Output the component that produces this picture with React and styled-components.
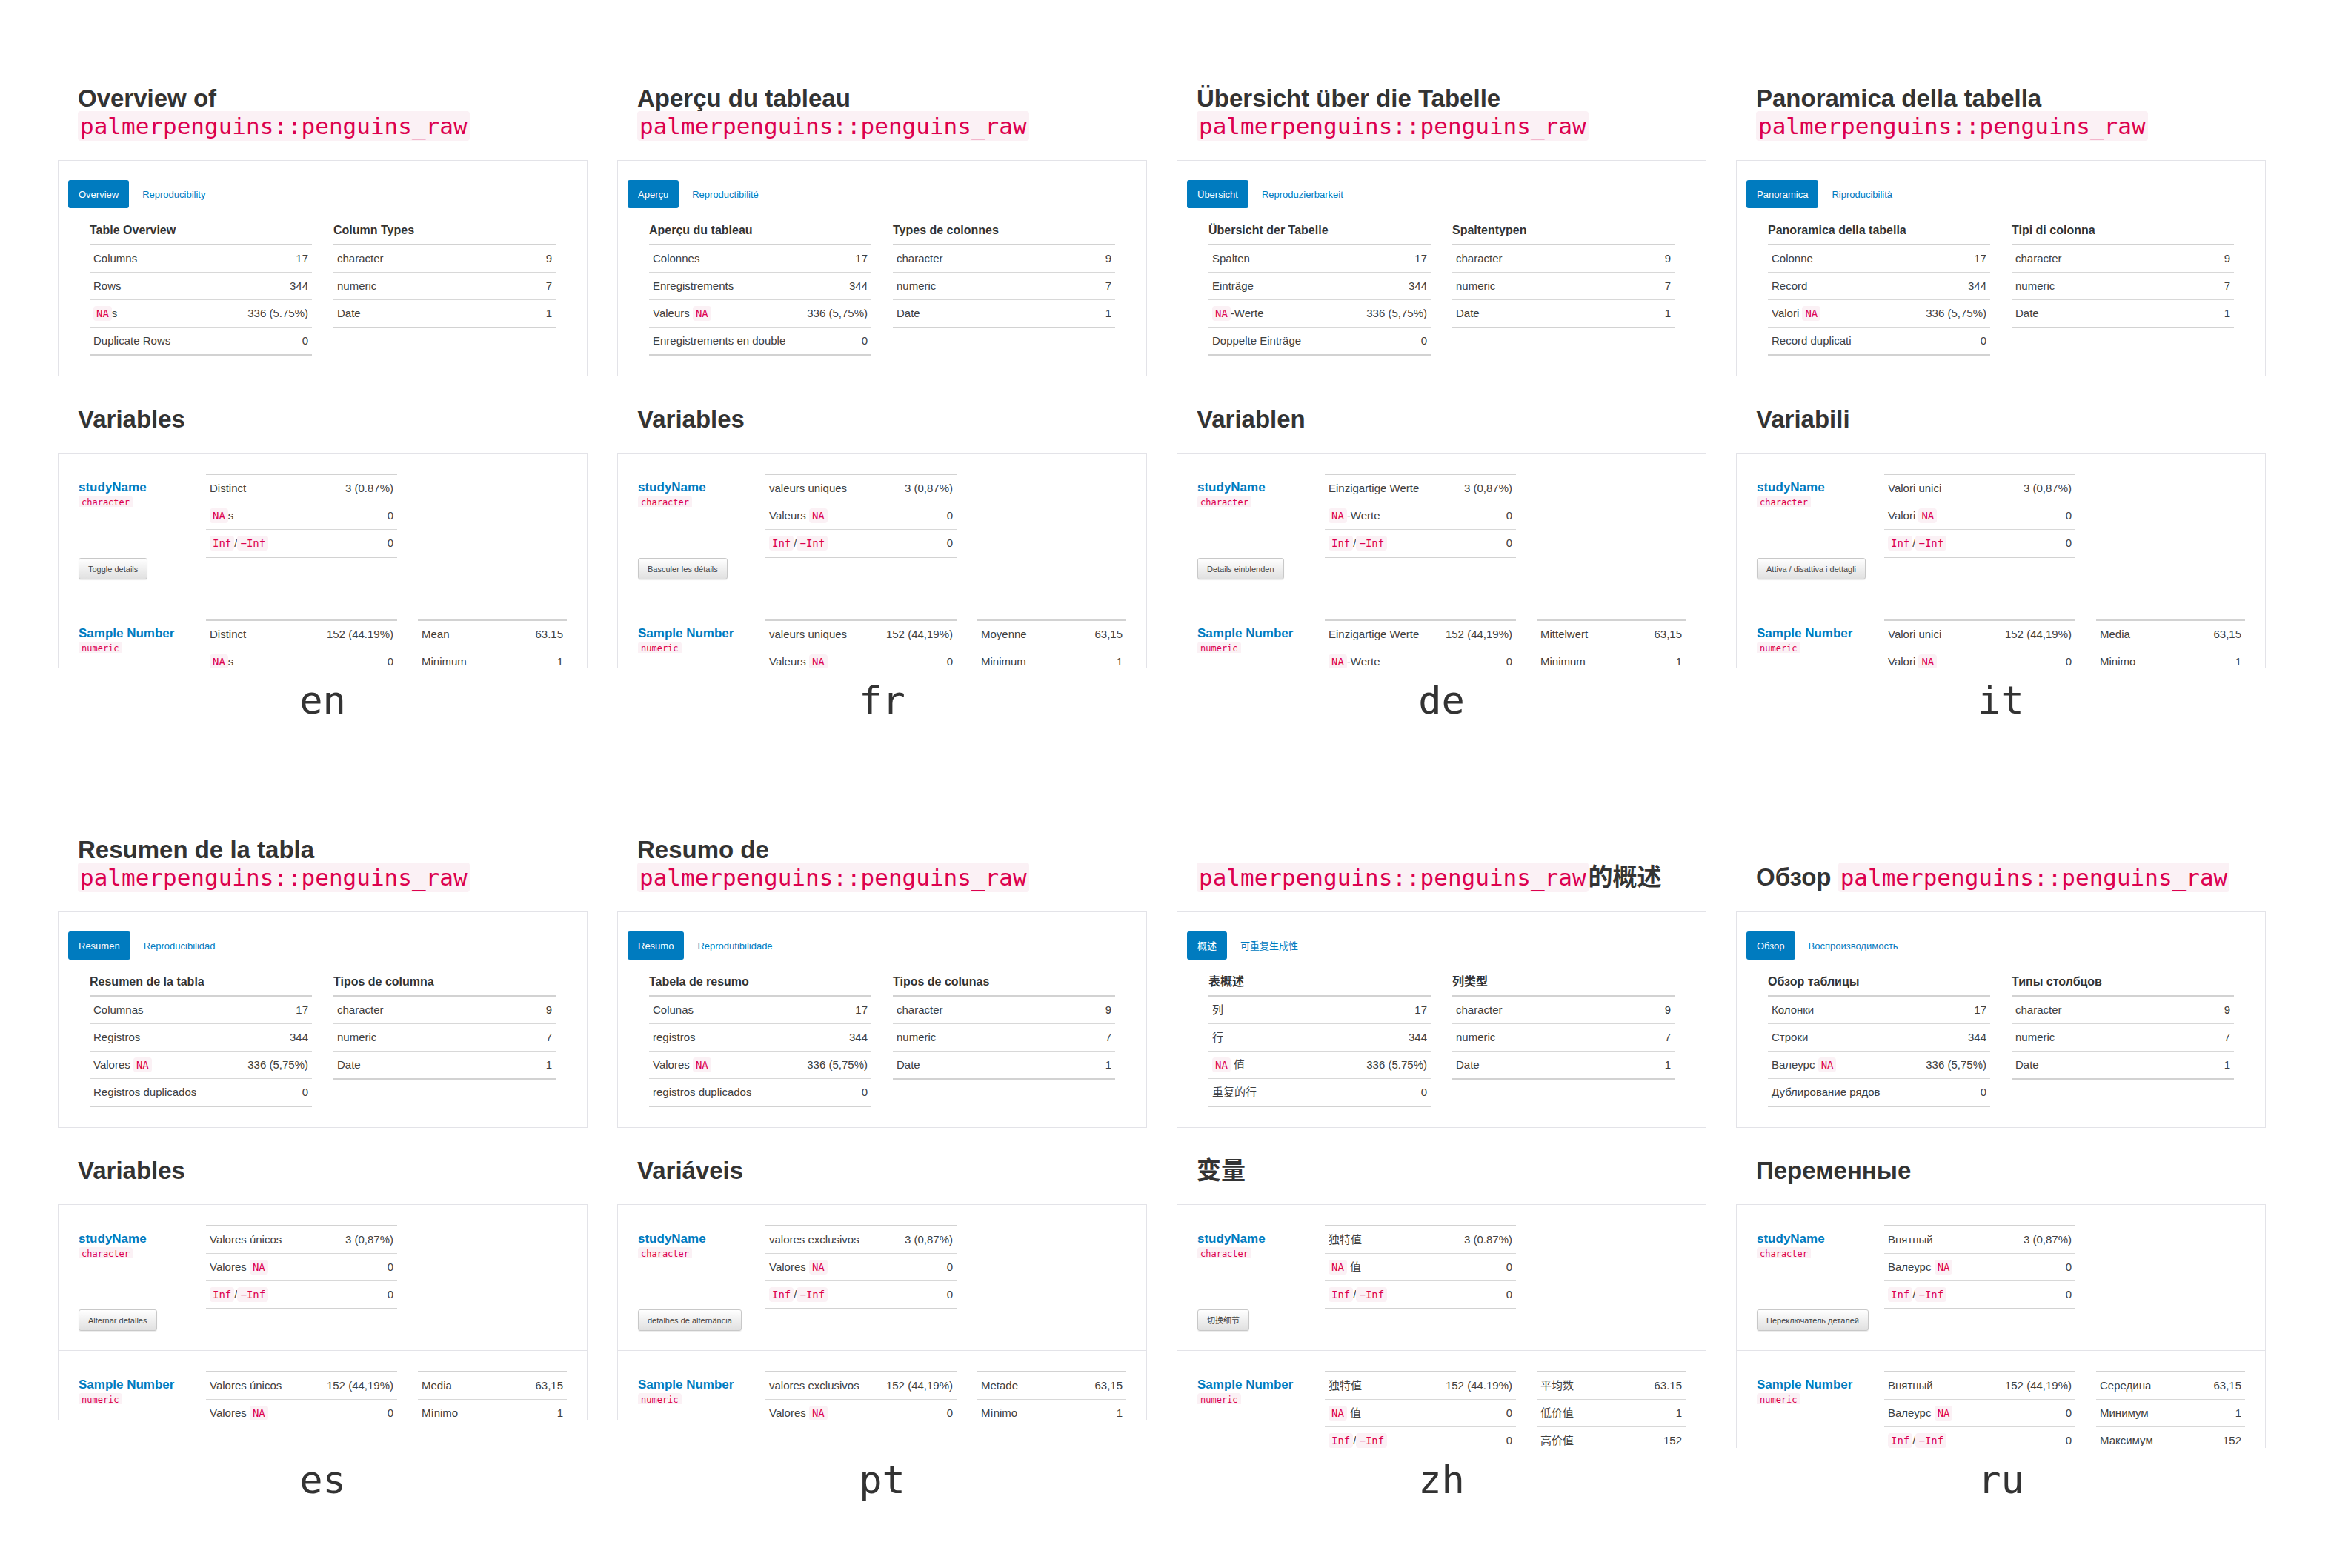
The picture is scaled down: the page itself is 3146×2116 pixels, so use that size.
import React from "react";
import styled, { createGlobalStyle } from "styled-components";

const sans = `"Liberation Sans", "Noto Sans CJK SC", Arial, sans-serif`;
const mono = `"DejaVu Sans Mono", "Liberation Mono", monospace`;

const color = {
  heading: "#333333",
  text: "#404040",
  blue: "#007bbf",
  code: "#dc004e",
  codeBg: "#fbf1f5",
  card: "#e3e3e8",
  rule: "#d2d2d2",
  line: "#d8d8d8",
};

const GlobalStyle = createGlobalStyle`
  *, *::before, *::after { box-sizing: border-box; }
  body { margin: 0; background: #fff; }
`;

const Page = styled.main`
  display: grid;
  grid-template-columns: repeat(4, minmax(0, 1fr));
  column-gap: 40px;
  row-gap: 153px;
  padding: 114px 88px 88px 78px;
  font: 15px/20px ${sans};
  color: ${color.text};
`;

const Panel = styled.figure`
  display: flex;
  flex-direction: column;
  margin: 0;
`;

const Preview = styled.div`
  height: ${(p) => (p.$tall ? 826 : 788)}px;
  overflow: hidden;
`;

const PanelLabel = styled.figcaption`
  margin-top: auto;
  padding-top: 13px;
  font: 52px/60px ${mono};
  color: ${color.heading};
  text-align: center;
`;

const Code = styled.code`
  padding: 2px ${(p) => (p.$size > 20 ? 3 : 4)}px;
  border-radius: 4px;
  background: ${color.codeBg};
  color: ${color.code};
  font: 400 ${(p) => p.$size || 14}px/1 ${mono};
`;

const Title = styled.h1`
  display: flex;
  align-items: flex-end;
  min-height: 74px;
  margin: 0 27px 28px;
  font: bold 33px/37px ${sans};
  color: ${color.heading};
`;

const SectionTitle = styled.h2`
  margin: 39px 27px 27px;
  font: bold 33px/37px ${sans};
  color: ${color.heading};
`;

const Card = styled.section`
  border: 1px solid ${color.card};
`;

const Tabs = styled.nav`
  display: flex;
  gap: 4px;
  padding: 26px 13px 0;
`;

const Tab = styled.a`
  padding: 10px 14px 8px;
  border-radius: 3px;
  background: ${(p) => (p.$active ? color.blue : "transparent")};
  color: ${(p) => (p.$active ? "#fff" : color.blue)};
  font-size: 13px;
  text-decoration: none;
`;

const Summary = styled.div`
  display: grid;
  grid-template-columns: repeat(2, minmax(0, 1fr));
  align-items: start;
  gap: 29px;
  padding: 20px 42px 27px;
`;

const TableTitle = styled.h3`
  margin: 0 0 8px;
  font: bold 16px/20px ${sans};
  color: ${color.heading};
`;

const Table = styled.table`
  width: 100%;
  border-spacing: 0;
  border-top: 2px solid ${color.rule};
  border-bottom: 2px solid ${color.rule};

  th, td {
    padding: 8px 5px;
    font-weight: 400;
    text-align: left;
    white-space: nowrap;
  }
  td { text-align: right; }
  tr + tr > * { border-top: 1px solid ${color.line}; }
`;

const Variable = styled.article`
  display: grid;
  grid-template-columns: minmax(0, 144fr) minmax(0, 258fr) minmax(0, 201fr);
  align-items: start;
  gap: 28px;
  padding: 27px 27px 26px;

  & + & { border-top: 1px solid ${color.card}; }
`;

const Identity = styled.header`
  padding-top: 9px;
`;

const VariableName = styled.h3`
  margin: 0;
  font: bold 17px/20px ${sans};
  white-space: nowrap;

  a { color: ${color.blue}; text-decoration: none; }
`;

const VariableType = styled.p`
  height: 16px;
  margin: 0;
  overflow: hidden;
  font: 12px/20px ${mono};
`;

const Toggle = styled.button`
  height: 29px;
  margin-top: 69px;
  padding: 0 12px;
  border: 1px solid #c8c8c8;
  border-radius: 3px;
  background: linear-gradient(#fff, #e0e0e0);
  box-shadow: 0 1px 1px rgba(0, 0, 0, 0.08);
  color: #444;
  font: 11px/16px ${sans};
  white-space: nowrap;
`;

const DATASET = <Code $size={31}>palmerpenguins::penguins_raw</Code>;
const NA = <Code>NA</Code>;
const INF = <><Code>Inf</Code>/<Code>−Inf</Code></>;

const languages = [
  {
    code: "en", title: <>Overview of<br />{DATASET}</>,
    tabs: ["Overview", "Reproducibility"], tables: ["Table Overview", "Column Types"],
    labels: ["Columns", "Rows", <>{NA}s</>, "Duplicate Rows"],
    variables: "Variables", distinct: "Distinct", toggle: "Toggle details",
    stats: ["Mean", "Minimum"], point: ".",
  },
  {
    code: "fr", title: <>Aperçu du tableau<br />{DATASET}</>,
    tabs: ["Aperçu", "Reproductibilité"], tables: ["Aperçu du tableau", "Types de colonnes"],
    labels: ["Colonnes", "Enregistrements", <>Valeurs {NA}</>, "Enregistrements en double"],
    variables: "Variables", distinct: "valeurs uniques", toggle: "Basculer les détails",
    stats: ["Moyenne", "Minimum"], point: ",",
  },
  {
    code: "de", title: <>Übersicht über die Tabelle<br />{DATASET}</>,
    tabs: ["Übersicht", "Reproduzierbarkeit"], tables: ["Übersicht der Tabelle", "Spaltentypen"],
    labels: ["Spalten", "Einträge", <>{NA}-Werte</>, "Doppelte Einträge"],
    variables: "Variablen", distinct: "Einzigartige Werte", toggle: "Details einblenden",
    stats: ["Mittelwert", "Minimum"], point: ",",
  },
  {
    code: "it", title: <>Panoramica della tabella<br />{DATASET}</>,
    tabs: ["Panoramica", "Riproducibilità"], tables: ["Panoramica della tabella", "Tipi di colonna"],
    labels: ["Colonne", "Record", <>Valori {NA}</>, "Record duplicati"],
    variables: "Variabili", distinct: "Valori unici", toggle: "Attiva / disattiva i dettagli",
    stats: ["Media", "Minimo"], point: ",",
  },
  {
    code: "es", title: <>Resumen de la tabla<br />{DATASET}</>,
    tabs: ["Resumen", "Reproducibilidad"], tables: ["Resumen de la tabla", "Tipos de columna"],
    labels: ["Columnas", "Registros", <>Valores {NA}</>, "Registros duplicados"],
    variables: "Variables", distinct: "Valores únicos", toggle: "Alternar detalles",
    stats: ["Media", "Mínimo"], point: ",",
  },
  {
    code: "pt", title: <>Resumo de<br />{DATASET}</>,
    tabs: ["Resumo", "Reprodutibilidade"], tables: ["Tabela de resumo", "Tipos de colunas"],
    labels: ["Colunas", "registros", <>Valores {NA}</>, "registros duplicados"],
    variables: "Variáveis", distinct: "valores exclusivos", toggle: "detalhes de alternância",
    stats: ["Metade", "Mínimo"], point: ",",
  },
  {
    code: "zh", title: <>{DATASET}的概述</>,
    tabs: ["概述", "可重复生成性"], tables: ["表概述", "列类型"],
    labels: ["列", "行", <>{NA} 值</>, "重复的行"],
    variables: "变量", distinct: "独特值", toggle: "切换细节",
    stats: ["平均数", "低价值", "高价值"], point: ".",
  },
  {
    code: "ru", title: <>Обзор {DATASET}</>,
    tabs: ["Обзор", "Воспроизводимость"], tables: ["Обзор таблицы", "Типы столбцов"],
    labels: ["Колонки", "Строки", <>Валеурс {NA}</>, "Дублирование рядов"],
    variables: "Переменные", distinct: "Внятный", toggle: "Переключатель деталей",
    stats: ["Середина", "Минимум", "Максимум"], point: ",",
  },
];

function DataTable({ rows }) {
  return (
    <Table>
      <tbody>
        {rows.map(([label, value], i) => (
          <tr key={i}>
            <th scope="row">{label}</th>
            <td>{value}</td>
          </tr>
        ))}
      </tbody>
    </Table>
  );
}

function VariableIdentity({ name, type, toggle }) {
  return (
    <Identity>
      <VariableName><a href="#variable">{name}</a></VariableName>
      <VariableType><Code $size={12}>{type}</Code></VariableType>
      {toggle && <Toggle type="button">{toggle}</Toggle>}
    </Identity>
  );
}

function LanguagePanel({ lang }) {
  const num = (s) => s.replace(".", lang.point);
  const na = lang.labels[2];
  const tall = lang.stats.length > 2;
  const counts = ["17", "344", num("336 (5.75%)"), "0"];
  const stats = [num("63.15"), "1", "152"];
  const quality = [[lang.distinct, num("152 (44.19%)")], [na, "0"], [INF, "0"]];

  return (
    <Panel lang={lang.code}>
      <Preview $tall={tall}>
        <Title><span>{lang.title}</span></Title>
        <Card>
          <Tabs>
            <Tab href="#overview" $active>{lang.tabs[0]}</Tab>
            <Tab href="#reproducibility">{lang.tabs[1]}</Tab>
          </Tabs>
          <Summary>
            <div>
              <TableTitle>{lang.tables[0]}</TableTitle>
              <DataTable rows={lang.labels.map((l, i) => [l, counts[i]])} />
            </div>
            <div>
              <TableTitle>{lang.tables[1]}</TableTitle>
              <DataTable rows={[["character", "9"], ["numeric", "7"], ["Date", "1"]]} />
            </div>
          </Summary>
        </Card>
        <SectionTitle>{lang.variables}</SectionTitle>
        <Card>
          <Variable>
            <VariableIdentity name="studyName" type="character" toggle={lang.toggle} />
            <DataTable rows={[[lang.distinct, num("3 (0.87%)")], [na, "0"], [INF, "0"]]} />
          </Variable>
          <Variable>
            <VariableIdentity name="Sample Number" type="numeric" />
            <DataTable rows={quality.slice(0, lang.stats.length)} />
            <DataTable rows={lang.stats.map((l, i) => [l, stats[i]])} />
          </Variable>
        </Card>
      </Preview>
      <PanelLabel>{lang.code}</PanelLabel>
    </Panel>
  );
}

export default function App() {
  return (
    <>
      <GlobalStyle />
      <Page>
        {languages.map((lang) => <LanguagePanel key={lang.code} lang={lang} />)}
      </Page>
    </>
  );
}
